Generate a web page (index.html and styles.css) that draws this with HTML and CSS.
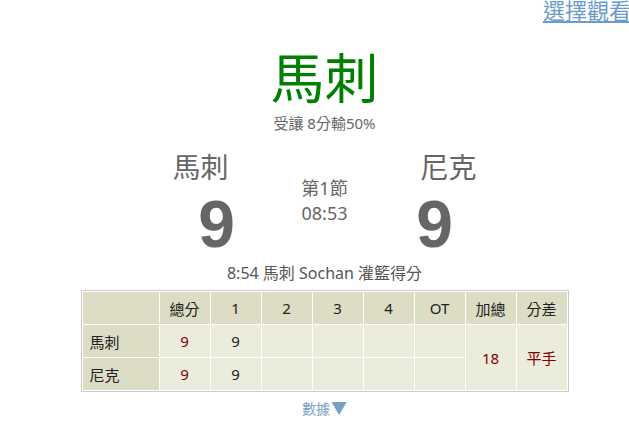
FILE: index.html
```html
<!DOCTYPE HTML>
<html>
<head>
    <title>馬刺 vs 尼克</title>
    <meta name="viewport" content="width=device-width, initial-scale=1">
    <meta http-equiv="content-type" content="text/html; charset=utf-8">
    <link rel="stylesheet" href="styles.css">
</head>
<body>
    <div class="page">
        <div class="topbar">
            <a href="#choose" class="choose">選擇觀看</a>
        </div>

        <div class="title">馬刺</div>
        <div class="handicap">受讓 8分輸50%</div>

        <div class="board">
            <div class="team team-home">
                <div class="team-name">馬刺</div>
                <div class="team-score">9</div>
            </div>
            <div class="period">
                <div>第1節</div>
                <div>08:53</div>
            </div>
            <div class="team team-away">
                <div class="team-name">尼克</div>
                <div class="team-score">9</div>
            </div>
        </div>

        <div class="event">8:54 馬刺 Sochan 灌籃得分</div>

        <table class="scores">
            <tr class="head">
                <td class="label"></td>
                <td>總分</td>
                <td>1</td>
                <td>2</td>
                <td>3</td>
                <td>4</td>
                <td>OT</td>
                <td>加總</td>
                <td>分差</td>
            </tr>
            <tr>
                <td class="label">馬刺</td>
                <td class="red">9</td>
                <td>9</td>
                <td></td>
                <td></td>
                <td></td>
                <td></td>
                <td class="red" rowspan="2">18</td>
                <td class="red" rowspan="2">平手</td>
            </tr>
            <tr>
                <td class="label">尼克</td>
                <td class="red">9</td>
                <td>9</td>
                <td></td>
                <td></td>
                <td></td>
                <td></td>
            </tr>
        </table>

        <div class="more"><a href="#stats">數據<span class="arrow">▼</span></a></div>
    </div>
</body>
</html>
```

FILE: styles.css
```css
* {box-sizing: border-box;}

html, body {
  overflow: hidden;
}

body {
  margin: 0;
  font-family: "Noto Sans", "Noto Sans CJK TC", sans-serif;
  color: #555;
  background: #fff;
}

.page {
  padding-left: 20px;
  text-align: center;
}

.topbar {
  height: 22px;
  text-align: right;
  margin-right: -2px;
}

.choose {
  font-size: 22px;
  line-height: 20px;
  color: #6b9bc8;
  text-decoration: underline;
}

.title {
  margin-top: 26px;
  font-size: 54px;
  line-height: 56px;
  color: #008000;
  font-family: "Noto Sans CJK TC", sans-serif;
}

.handicap {
  margin-top: 9px;
  font-size: 15px;
  line-height: 20px;
  color: #666;
}

.board {
  display: flex;
  width: 368px;
  margin: 17px auto 0;
  color: #666;
}

.team {
  width: 120px;
}

.team-name {
  font-size: 28px;
  line-height: 34px;
}

.team-score {
  margin-top: 8px;
  font-family: "Liberation Sans", Arial, sans-serif;
  font-weight: bold;
  font-size: 66px;
  line-height: 65px;
}

.team-home .team-score {
  padding-left: 32px;
}

.team-away .team-score {
  padding-right: 28px;
}

.period {
  flex: 1;
  padding-top: 26px;
  font-size: 18px;
  line-height: 25px;
}

.event {
  margin-top: 6px;
  font-size: 16px;
  line-height: 20px;
  color: #555;
}

.scores {
  margin: 7px auto 0;
  border: 1px solid #ccc;
  border-collapse: separate;
  border-spacing: 1px;
  background: #fff;
  font-size: 15px;
  color: #222;
}

.scores td {
  width: 50px;
  height: 32px;
  padding: 0;
  text-align: center;
  background: #ececdc;
}

.scores .head td,
.scores td.label {
  background: #ddddc6;
}

.scores td.label {
  width: 76px;
  padding-left: 7px;
  text-align: left;
}

.scores td.red {
  color: #800000;
}

.more {
  margin-top: 6px;
  font-size: 14px;
  line-height: 20px;
}

.more a {
  color: #7a9fc6;
  text-decoration: none;
}

.more .arrow {
  font-size: 16px;
  margin-left: 1px;
}
```
